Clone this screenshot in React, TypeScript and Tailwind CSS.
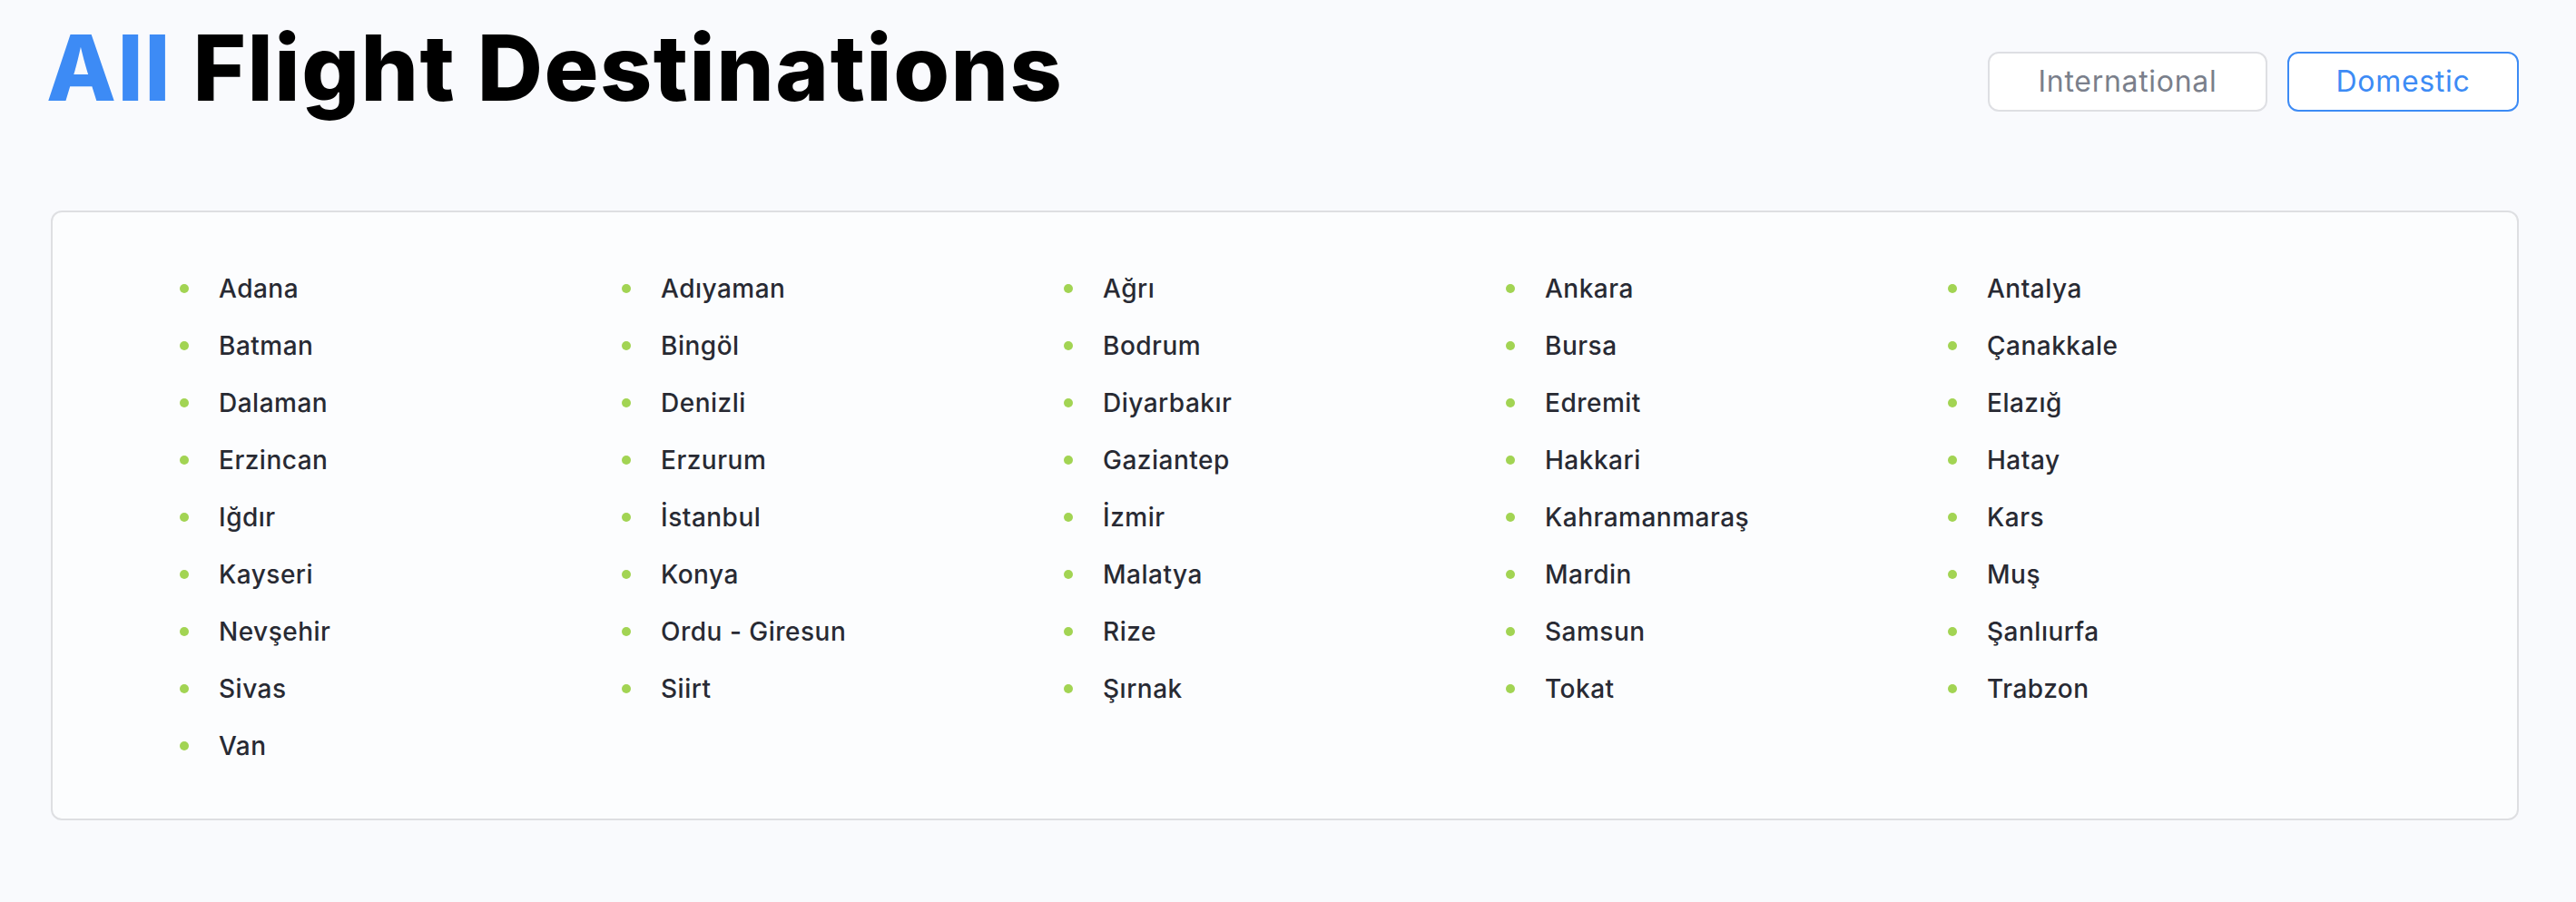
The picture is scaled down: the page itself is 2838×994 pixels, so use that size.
const columns: string[][] = [
  ["Adana", "Batman", "Dalaman", "Erzincan", "Iğdır", "Kayseri", "Nevşehir", "Sivas", "Van"],
  ["Adıyaman", "Bingöl", "Denizli", "Erzurum", "İstanbul", "Konya", "Ordu - Giresun", "Siirt"],
  ["Ağrı", "Bodrum", "Diyarbakır", "Gaziantep", "İzmir", "Malatya", "Rize", "Şırnak"],
  ["Ankara", "Bursa", "Edremit", "Hakkari", "Kahramanmaraş", "Mardin", "Samsun", "Tokat"],
  ["Antalya", "Çanakkale", "Elazığ", "Hatay", "Kars", "Muş", "Şanlıurfa", "Trabzon"],
];

export default function App() {
  return (
    <div className="min-h-[994px] bg-[#f9fafd] pl-[56px] pr-[63px] pt-[20px] font-['Inter',_sans-serif]">
      <div className="flex items-start justify-between">
        <h1 className="-ml-[5px] text-[100px] leading-[110px] font-extrabold tracking-[1.5px] text-black">
          <span className="text-[#3d8bf5]">All</span> Flight Destinations
        </h1>
        <div className="mt-[37px] flex gap-[22px]">
          <button className="h-[66px] w-[308px] rounded-[12px] border-2 border-[#dedfe3] bg-white text-[32px] tracking-[0.7px] text-[#7a7f8b]">
            International
          </button>
          <button className="h-[66px] w-[255px] rounded-[12px] border-2 border-[#3d8bf5] bg-white text-[32px] tracking-[0.7px] text-[#3d8bf5]">
            Domestic
          </button>
        </div>
      </div>

      <div className="mt-[102px] grid grid-cols-5 rounded-[12px] border-2 border-[#dedfe2] bg-[#fcfdfe] px-[140px] pt-[64px] pb-[60px]">
        {columns.map((col, i) => (
          <ul key={i} className="flex flex-col gap-[23px]">
            {col.map((city) => (
              <li key={city} className="flex h-[40px] items-center text-[28px] font-medium tracking-[0.5px] text-[#282a33]">
                <span className="mr-[33px] h-[10px] w-[10px] shrink-0 rounded-full bg-[#a2d453]" />
                {city}
              </li>
            ))}
          </ul>
        ))}
      </div>
    </div>
  );
}
